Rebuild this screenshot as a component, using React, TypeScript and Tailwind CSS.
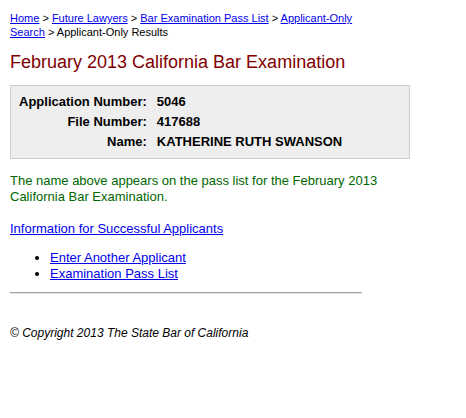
export default function App() {
  return (
    <div className="min-h-screen bg-white px-[10px] pt-[11px] font-['Liberation_Sans',Arial,sans-serif] text-black">
      <div className="w-[400px]">
        {/* breadcrumb */}
        <p className="max-w-[380px] text-[11px] leading-[14px]">
          <a href="#" className="text-[#0000ee] underline">Home</a> &gt;{" "}
          <a href="#" className="text-[#0000ee] underline">Future Lawyers</a> &gt;{" "}
          <a href="#" className="text-[#0000ee] underline">Bar Examination Pass List</a> &gt;{" "}
          <a href="#" className="text-[#0000ee] underline">Applicant-Only Search</a> &gt; Applicant-Only Results
        </p>

        <h1 className="mt-[12px] text-[18px] leading-[22px] text-[#800000]">
          February 2013 California Bar Examination
        </h1>

        <div className="mt-[12px] border border-[#cccccc] bg-[#eeeeee] pl-[8px] pt-[6px] pb-[6px]">
          <table className="text-[13px] font-bold leading-[20px]">
            <tbody>
              <tr>
                <td className="pr-[10px] text-right">Application Number:</td>
                <td>5046</td>
              </tr>
              <tr>
                <td className="pr-[10px] text-right">File Number:</td>
                <td>417688</td>
              </tr>
              <tr>
                <td className="pr-[10px] text-right">Name:</td>
                <td>KATHERINE RUTH SWANSON</td>
              </tr>
            </tbody>
          </table>
        </div>

        <p className="mt-[14px] text-[13px] leading-[16px] text-[#006600]">
          The name above appears on the pass list for the February 2013 California Bar Examination.
        </p>

        <p className="mt-[16px] text-[13px] leading-[16px]">
          <a href="#" className="text-[#0000ee] underline">Information for Successful Applicants</a>
        </p>

        <ul className="mt-[13px] list-disc pl-[40px] text-[13px] leading-[16px]">
          <li><a href="#" className="text-[#0000ee] underline">Enter Another Applicant</a></li>
          <li><a href="#" className="text-[#0000ee] underline">Examination Pass List</a></li>
        </ul>

        <hr className="mt-[10px] w-[352px] border-t border-b border-t-[#a0a0a0] border-b-[#e8e8e8]" />

        <p className="mt-[31px] text-[12px] italic leading-[16px]">
          © Copyright 2013 The State Bar of California
        </p>
      </div>
    </div>
  );
}
